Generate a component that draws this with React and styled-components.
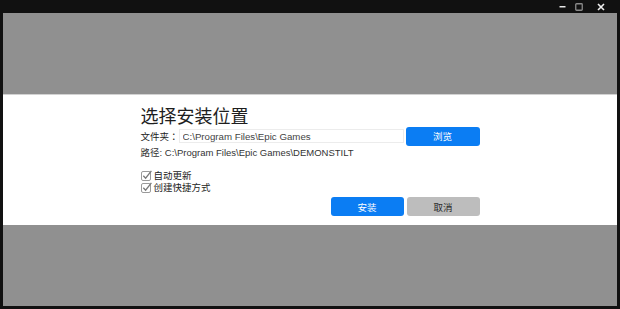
import React from "react";
import styled, { createGlobalStyle } from "styled-components";

const GlobalStyle = createGlobalStyle`
  html, body {
    margin: 0;
    padding: 0;
    background: #111111;
  }
  body {
    font-family: "Liberation Sans", "Noto Sans CJK SC", sans-serif;
  }
`;

const CheckIcon = () => (
  <svg width="11" height="11" viewBox="0 0 11 11">
    <rect x="0.5" y="1.5" width="9" height="9" rx="1.5" fill="none" stroke="#9a9a9a" />
    <path d="M2.3 5.8 L4.6 8.2 L10.4 0.8" fill="none" stroke="#7a7a7a" strokeWidth="1.3" />
  </svg>
);

const App = () => {
  return (
    <Window>
      <GlobalStyle />
      <TitleBar>
        <WinButton $w={11}>
          <svg width="7" height="7" viewBox="0 0 7 7">
            <rect x="0.5" y="3" width="6" height="1.5" fill="#e6e6e6" />
          </svg>
        </WinButton>
        <WinButton $w={22}>
          <svg width="8" height="8" viewBox="0 0 8 8">
            <rect x="0.75" y="0.75" width="6.5" height="6.5" rx="0.8" fill="none" stroke="#8a8a8a" strokeWidth="1.3" />
          </svg>
        </WinButton>
        <WinButton $w={22}>
          <svg width="8" height="8" viewBox="0 0 8 8">
            <path d="M1 1 L7 7 M7 1 L1 7" stroke="#f0f0f0" strokeWidth="1.6" />
          </svg>
        </WinButton>
      </TitleBar>
      <Body>
        <Band>
          <Content>
            <Title>选择安装位置</Title>
            <FolderRow>
              <Label>
                文件夹<Colon>：</Colon>
              </Label>
              <PathInput defaultValue="C:\Program Files\Epic Games" />
              <Button $variant="primary">浏览</Button>
            </FolderRow>
            <PathLine>路径: C:\Program Files\Epic Games\DEMONSTILT</PathLine>
            <Options>
              <Option>
                <CheckIcon />
                <span>自动更新</span>
              </Option>
              <Option>
                <CheckIcon />
                <span>创建快捷方式</span>
              </Option>
            </Options>
            <Actions>
              <Button $variant="primary" $w={73}>安装</Button>
              <Button $w={73}>取消</Button>
            </Actions>
          </Content>
        </Band>
      </Body>
    </Window>
  );
};

export default App;

const Window = styled.div`
  width: 620px;
  height: 309px;
  box-sizing: border-box;
  padding: 0 3px 3px 3px;
  background: #111111;
  display: flex;
  flex-direction: column;
`;

const TitleBar = styled.div`
  height: 13px;
  display: flex;
  justify-content: flex-end;
  align-items: center;
  padding-right: 5px;
`;

const WinButton = styled.div`
  width: ${(p) => p.$w}px;
  height: 13px;
  display: flex;
  align-items: center;
  justify-content: center;
`;

const Body = styled.div`
  flex: 1;
  background: #909090;
  display: flex;
  flex-direction: column;
  justify-content: center;
`;

const Band = styled.div`
  height: 131px;
  box-sizing: border-box;
  border-top: 1px solid #d2d2d2;
  background: #ffffff;
  display: flex;
  justify-content: center;
`;

const Content = styled.div`
  width: 339px;
  padding-top: 9px;
  display: flex;
  flex-direction: column;
`;

const Title = styled.h1`
  margin: 0;
  font-size: 18px;
  line-height: 22px;
  font-weight: 400;
  color: #1e1e1e;
  font-family: "Noto Sans CJK SC", sans-serif;
`;

const FolderRow = styled.div`
  height: 20px;
  display: flex;
  align-items: center;
`;

const Label = styled.span`
  font-size: 9.5px;
  color: #222;
  width: 38px;
  flex-shrink: 0;
  white-space: nowrap;
`;

const Colon = styled.span`
  font-family: "Noto Sans CJK TC", sans-serif;
`;

const PathInput = styled.input`
  width: 225px;
  height: 14px;
  box-sizing: border-box;
  border: 1px solid #ececec;
  padding: 0 3px;
  font-family: "Liberation Sans", sans-serif;
  font-size: 9.7px;
  color: #444;
  outline: none;
  margin-right: 2px;
`;

const Button = styled.button`
  width: ${(p) => p.$w || 74}px;
  height: 19px;
  border: none;
  border-radius: 3px;
  font-family: "Noto Sans CJK SC", sans-serif;
  font-size: 9.5px;
  padding: 0;
  background: ${(p) => (p.$variant === "primary" ? "#0b7df3" : "#bdbdbd")};
  color: ${(p) => (p.$variant === "primary" ? "#ffffff" : "#2a2a2a")};
`;

const PathLine = styled.div`
  margin-top: 1px;
  font-size: 9.5px;
  line-height: 12px;
  color: #333;
`;

const Options = styled.div`
  margin-top: 10px;
  display: flex;
  flex-direction: column;
`;

const Option = styled.label`
  height: 12px;
  display: flex;
  align-items: center;
  gap: 2px;
  font-size: 9.5px;
  color: #222;
`;

const Actions = styled.div`
  margin-top: 4px;
  display: flex;
  justify-content: flex-end;
  gap: 3px;
`;
